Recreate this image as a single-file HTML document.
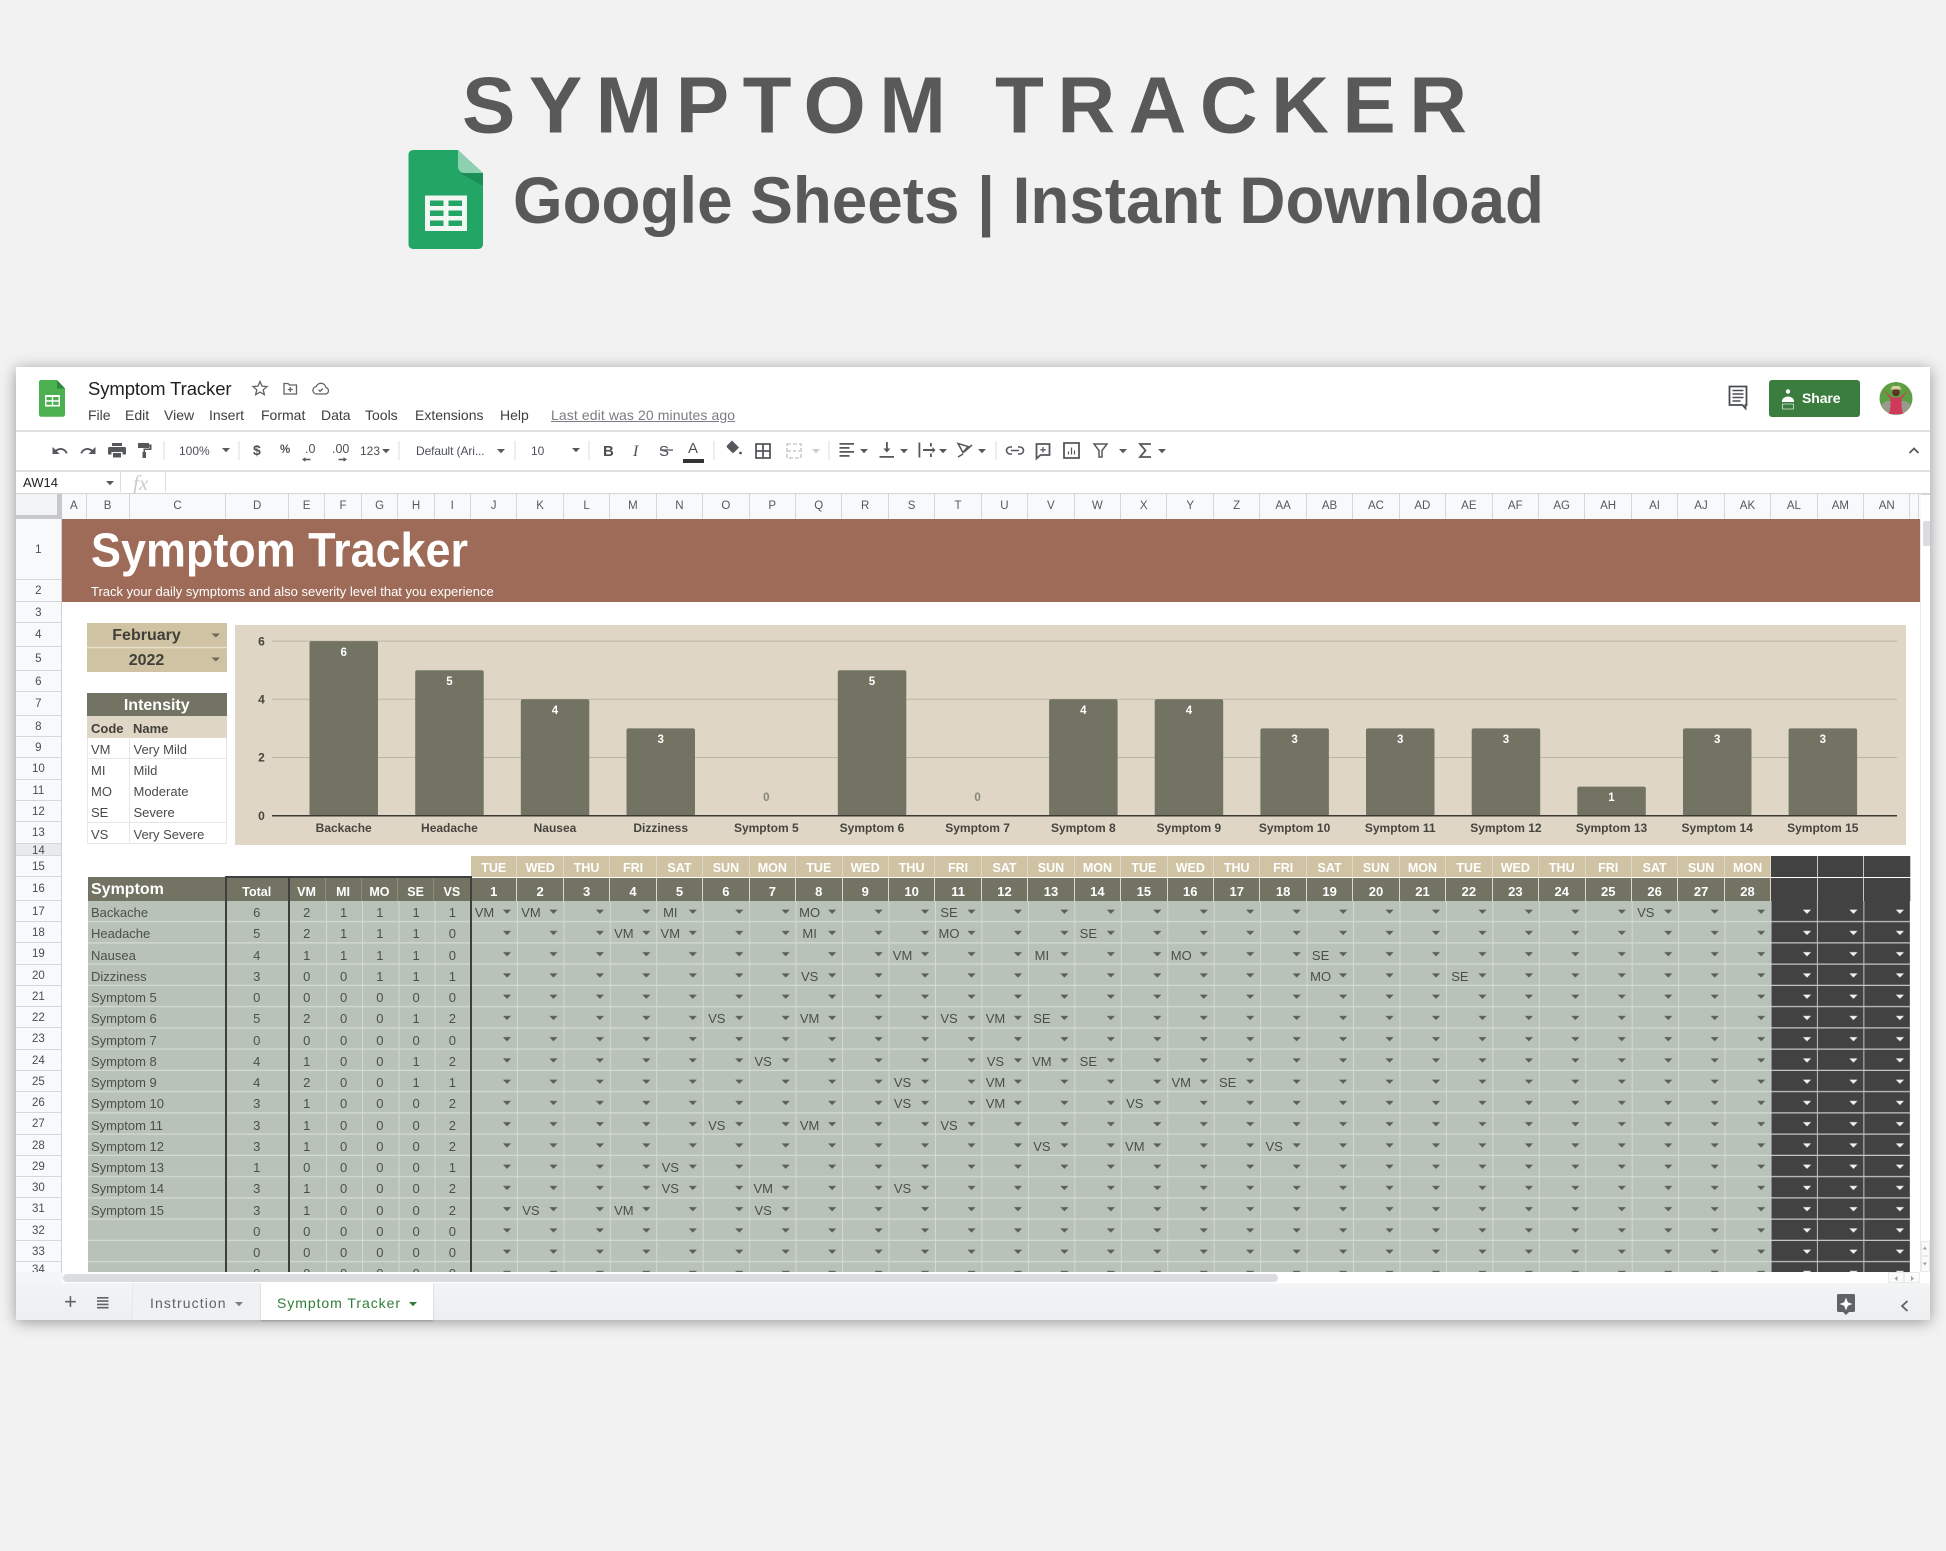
<!DOCTYPE html>
<html lang="en"><head><meta charset="utf-8"><title>Symptom Tracker</title>
<style>
*{box-sizing:border-box}
html,body{margin:0;padding:0}
body{position:relative;width:1946px;height:1551px;overflow:hidden;background:#f2f2f2;font-family:"Liberation Sans",Arial,sans-serif;color:#3c4043}
.a{position:absolute}
#win{left:15.5px;top:367px;width:1914.5px;height:953px;background:#fff;box-shadow:0 2px 14px rgba(0,0,0,.38)}
.hl{position:absolute;left:15.5px;width:1914.5px;height:1.5px;background:#dfe1e3}
.sep{position:absolute;width:1px;background:#dadce0}
.m{position:absolute;top:407px;font-size:14px;line-height:17px;color:#3c4043}
.t{position:absolute;font-size:12px;line-height:14px;color:#4d5156;top:443px}
#ch{left:15.5px;top:494px;width:1905px;height:25px;display:grid;grid-template-columns:46.5px 24.7px 42.9px 96.9px 62.3px 36.7px 36.2px 36.8px 36.2px 36.3px repeat(31,46.45px) 9px;background:#f8f9fa}
#ch i{font-style:normal;font-size:11.5px;line-height:25px;text-align:center;color:#55585c;border-right:1px solid #d5d8db;border-bottom:1px solid #c4c7c9}
#rh{left:15.7px;top:519px;width:46.3px;height:753px;display:grid;grid-template-rows:61px 22px 20.7px 24px 24.3px 21px 24px 21px 21.5px 21.5px 21px 21px 22px 12px 21px 24px repeat(18,21.25px);overflow:hidden;background:#f8f9fa}
#rh i{font-style:normal;font-size:11.5px;text-align:center;color:#4a4d50;border-bottom:1px solid #d5d8db;border-right:1px solid #cfd2d5;overflow:hidden;display:flex;align-items:center;justify-content:center;padding-top:1.5px}
#gr{left:87.5px;top:901px;width:1822.5px;height:371px;overflow:hidden}
.r{display:flex;height:21.25px;font-size:13px;line-height:23px;color:#4c5048;position:relative}
.r i{font-style:normal;text-align:center;display:block}
.r i:nth-child(1){width:138px;text-align:left;padding-left:3.5px}
.r i:nth-child(2){width:62.5px}.r i:nth-child(3){width:37.5px}.r i:nth-child(4){width:36.2px}.r i:nth-child(5){width:36.4px}.r i:nth-child(6){width:36px}.r i:nth-child(7){width:36.5px}
.v{position:absolute;width:28px;text-align:center;font-size:13px;line-height:23px;color:#4a4e46;left:calc(383px + var(--c)*46.45px);top:calc(var(--r)*21.25px)}
.hd{left:471px;display:flex;font-weight:700;font-size:12.5px;text-align:center;color:#fff}
.hd i{font-style:normal;width:46.45px;border-right:1px solid #dcd8cc;display:block}
.hd i.k{background:#424242!important;border-right:1px solid #c8c8c8}
#d1{top:856px;height:21px;line-height:24px}#d1 i{background:#cfc3a3}
#d2{top:878px;height:23px;line-height:28px;font-size:13px}#d2 i{background:#727363}
.lh{top:877px;height:24px;background:#727363;color:#fff;font-weight:700;font-size:12.5px;line-height:31px;text-align:center;border-right:1px solid #8d8e80}
.ir{left:87px;width:139.5px;height:21.5px;background:#fff;border-bottom:1.5px solid #e6e6e6;font-size:13px;line-height:23px;color:#4a4a4a;border-left:1.5px solid #e6e6e6;border-right:1.5px solid #e6e6e6}
.ir b{font-weight:400;position:absolute;left:3px;top:0}.ir em{font-style:normal;position:absolute;left:45.5px;top:0}
</style></head><body>

<div class="a" id="win"></div>

<!-- top separators -->
<div class="hl" style="top:430px"></div>
<div class="hl" style="top:470px"></div>
<div class="hl" style="top:493px;background:#d3d5d8"></div>

<!-- title bar text -->
<div class="a" style="left:88px;top:378px;font-size:18.5px;line-height:22px;color:#202124;letter-spacing:-.1px">Symptom Tracker</div>
<div class="m" style="left:88px">File</div><div class="m" style="left:125px">Edit</div><div class="m" style="left:164px">View</div><div class="m" style="left:209px">Insert</div><div class="m" style="left:261px">Format</div><div class="m" style="left:321px">Data</div><div class="m" style="left:365px">Tools</div><div class="m" style="left:415px">Extensions</div><div class="m" style="left:500px">Help</div>
<div class="m" style="left:551px;color:#7a7d81;text-decoration:underline;letter-spacing:.1px">Last edit was 20 minutes ago</div>

<!-- share -->
<div class="a" style="left:1769px;top:380px;width:91px;height:37px;background:#3b7d3f;border-radius:3px"></div>
<div class="a" style="left:1802px;top:390px;font-size:14px;line-height:17px;color:#fff;font-weight:700;letter-spacing:-.1px">Share</div>

<!-- toolbar text -->
<div class="t" style="left:179px;top:444px">100%</div>
<div class="t" style="left:253px;font-size:14px;top:443px;font-weight:700">$</div>
<div class="t" style="left:280px;font-weight:700;font-size:11.5px">%</div>
<div class="t" style="left:305px;font-weight:400;font-size:12.5px;top:442px">.0</div>
<div class="t" style="left:332px;font-weight:400;font-size:12.5px;top:442px">.00</div>
<div class="t" style="left:360px;top:444px">123</div>
<div class="t" style="left:416px;top:444px;letter-spacing:-.1px">Default (Ari...</div>
<div class="t" style="left:531px;top:444px">10</div>
<div class="t" style="left:603px;top:443px;font-weight:700;font-size:15px;line-height:17px">B</div>
<div class="t" style="left:633px;top:443px;font-size:16px;line-height:17px;font-family:'Liberation Serif',serif;font-style:italic">I</div>
<div class="t" style="left:659px;top:443px;font-size:15px;line-height:17px">S</div>
<div class="t" style="left:688px;top:440px;font-size:15px;line-height:17px">A</div>
<div class="a" style="left:683px;top:459px;width:21px;height:4px;background:#333"></div>

<!-- formula bar -->
<div class="a" style="left:23px;top:475px;font-size:13px;line-height:15px;color:#202124">AW14</div>
<div class="a" style="left:133px;top:471px;font-size:21px;line-height:24px;color:#c9cbce;font-family:'Liberation Serif',serif;font-style:italic">fx</div>
<div class="sep" style="left:120px;top:472px;height:20px"></div>
<div class="sep" style="left:165px;top:472px;height:20px"></div>

<!-- column headers -->
<div class="a" id="ch"><i style="background:#f1f3f4;border-right:5px solid #c6c8cb;border-bottom:5px solid #c6c8cb"></i><i>A</i><i>B</i><i>C</i><i>D</i><i>E</i><i>F</i><i>G</i><i>H</i><i>I</i><i>J</i><i>K</i><i>L</i><i>M</i><i>N</i><i>O</i><i>P</i><i>Q</i><i>R</i><i>S</i><i>T</i><i>U</i><i>V</i><i>W</i><i>X</i><i>Y</i><i>Z</i><i>AA</i><i>AB</i><i>AC</i><i>AD</i><i>AE</i><i>AF</i><i>AG</i><i>AH</i><i>AI</i><i>AJ</i><i>AK</i><i>AL</i><i>AM</i><i>AN</i><i></i></div>

<!-- row headers -->
<div class="a" id="rh"><i>1</i><i>2</i><i>3</i><i>4</i><i>5</i><i>6</i><i>7</i><i>8</i><i>9</i><i>10</i><i>11</i><i>12</i><i>13</i><i style="background:#e8eaed;align-items:flex-start">14</i><i>15</i><i>16</i><i>17</i><i>18</i><i>19</i><i>20</i><i>21</i><i>22</i><i>23</i><i>24</i><i>25</i><i>26</i><i>27</i><i>28</i><i>29</i><i>30</i><i>31</i><i>32</i><i>33</i><i style="align-items:flex-start">34</i></div>

<!-- banner -->
<div class="a" style="left:62px;top:519px;width:1858px;height:83px;background:#9e6b58"></div>
<div class="a" style="left:91px;top:584px;font-size:13px;line-height:16px;color:#fff">Track your daily symptoms and also severity level that you experience</div>

<!-- dropdown block -->
<div class="a" style="left:87px;top:623px;width:140px;height:24px;background:#cfc3a3;font-weight:700;font-size:16px;line-height:26px;color:#403f38;text-align:center;padding-right:21px">February</div>
<div class="a" style="left:87px;top:648px;width:140px;height:24px;background:#cfc3a3;font-weight:700;font-size:16px;line-height:25px;color:#403f38;text-align:center;padding-right:21px">2022</div>

<!-- intensity -->
<div class="a" style="left:87px;top:693px;width:139.5px;height:23px;background:#727363;color:#fff;font-weight:700;font-size:16px;line-height:26px;text-align:center">Intensity</div>
<div class="a" style="left:87px;top:716px;width:139.5px;height:21.5px;background:#e0d6c5;font-size:13px;font-weight:700;line-height:25px;color:#403f38"><span class="a" style="left:4px">Code</span><span class="a" style="left:46px">Name</span></div>
<div class="a ir" style="top:737.5px"><b>VM</b><em>Very Mild</em></div>
<div class="a ir" style="top:759px"><b>MI</b><em>Mild</em></div>
<div class="a ir" style="top:780px"><b>MO</b><em>Moderate</em></div>
<div class="a ir" style="top:801px"><b>SE</b><em>Severe</em></div>
<div class="a ir" style="top:822.5px"><b>VS</b><em>Very Severe</em></div>
<div class="a" style="left:128.5px;top:737px;width:1.5px;height:107px;background:#e6e6e6"></div>

<!-- chart background -->
<div class="a" style="left:235px;top:624.5px;width:1671px;height:220px;background:#e0d6c5"></div>

<!-- table headers -->
<div class="a" style="left:87.5px;top:877px;width:138.5px;height:24px;background:#727363;color:#fff;font-weight:700;font-size:16px;line-height:25px;padding-left:3.5px">Symptom</div>
<div class="a lh" style="left:226px;width:62.5px">Total</div>
<div class="a lh" style="left:288.5px;width:37px">VM</div>
<div class="a lh" style="left:325.5px;width:36.2px">MI</div>
<div class="a lh" style="left:361.7px;width:36.4px">MO</div>
<div class="a lh" style="left:398.1px;width:36px">SE</div>
<div class="a lh" style="left:434.1px;width:36.5px">VS</div>

<div class="a hd" id="d1"><i>TUE</i><i>WED</i><i>THU</i><i>FRI</i><i>SAT</i><i>SUN</i><i>MON</i><i>TUE</i><i>WED</i><i>THU</i><i>FRI</i><i>SAT</i><i>SUN</i><i>MON</i><i>TUE</i><i>WED</i><i>THU</i><i>FRI</i><i>SAT</i><i>SUN</i><i>MON</i><i>TUE</i><i>WED</i><i>THU</i><i>FRI</i><i>SAT</i><i>SUN</i><i>MON</i><i class="k"></i><i class="k"></i><i class="k"></i></div>
<div class="a hd" id="d2"><i>1</i><i>2</i><i>3</i><i>4</i><i>5</i><i>6</i><i>7</i><i>8</i><i>9</i><i>10</i><i>11</i><i>12</i><i>13</i><i>14</i><i>15</i><i>16</i><i>17</i><i>18</i><i>19</i><i>20</i><i>21</i><i>22</i><i>23</i><i>24</i><i>25</i><i>26</i><i>27</i><i>28</i><i class="k"></i><i class="k"></i><i class="k"></i></div>

<!-- grid body -->
<div class="a" id="gr">
<svg class="a" style="left:0;top:0" width="1822.5" height="371" xmlns="http://www.w3.org/2000/svg">
<defs>
<pattern id="rowp" x="0" y="0" width="2000" height="21.25" patternUnits="userSpaceOnUse"><rect width="2000" height="21.25" fill="#b8c2b9"/><rect y="20" width="2000" height="1.25" fill="#d3d9d3"/></pattern>
<pattern id="dayp" x="383.5" y="0" width="46.45" height="21.25" patternUnits="userSpaceOnUse"><rect width="46.45" height="21.25" fill="#b8c2b9"/><rect y="20" width="46.45" height="1.25" fill="#d3d9d3"/><rect x="45.4" width="1" height="21.25" fill="#d3d9d3"/><path d="M31.4 8.6h8.2l-4.1 4.2z" fill="#5a5e55"/></pattern>
<pattern id="drkp" x="1683.5" y="0" width="46.45" height="21.25" patternUnits="userSpaceOnUse"><rect width="46.45" height="21.25" fill="#424242"/><rect y="20" width="46.45" height="1.25" fill="#c4c4c4"/><rect x="45.4" width="1" height="21.25" fill="#c4c4c4"/><path d="M31.4 8.6h8.2l-4.1 4.2z" fill="#f2f2f2"/></pattern>
</defs>
<rect x="0" y="0" width="383.5" height="371" fill="url(#rowp)"/>
<rect x="383.5" y="0" width="1300.6" height="371" fill="url(#dayp)"/>
<rect x="1683.5" y="0" width="139.4" height="371" fill="url(#drkp)"/>
<g fill="#d3d9d3"><rect x="238" width="1" height="371"/><rect x="274" width="1" height="371"/><rect x="310.5" width="1" height="371"/><rect x="346.5" width="1" height="371"/></g>
</svg>
<div class="r"><i>Backache</i><i>6</i><i>2</i><i>1</i><i>1</i><i>1</i><i>1</i></div>
<div class="r"><i>Headache</i><i>5</i><i>2</i><i>1</i><i>1</i><i>1</i><i>0</i></div>
<div class="r"><i>Nausea</i><i>4</i><i>1</i><i>1</i><i>1</i><i>1</i><i>0</i></div>
<div class="r"><i>Dizziness</i><i>3</i><i>0</i><i>0</i><i>1</i><i>1</i><i>1</i></div>
<div class="r"><i>Symptom 5</i><i>0</i><i>0</i><i>0</i><i>0</i><i>0</i><i>0</i></div>
<div class="r"><i>Symptom 6</i><i>5</i><i>2</i><i>0</i><i>0</i><i>1</i><i>2</i></div>
<div class="r"><i>Symptom 7</i><i>0</i><i>0</i><i>0</i><i>0</i><i>0</i><i>0</i></div>
<div class="r"><i>Symptom 8</i><i>4</i><i>1</i><i>0</i><i>0</i><i>1</i><i>2</i></div>
<div class="r"><i>Symptom 9</i><i>4</i><i>2</i><i>0</i><i>0</i><i>1</i><i>1</i></div>
<div class="r"><i>Symptom 10</i><i>3</i><i>1</i><i>0</i><i>0</i><i>0</i><i>2</i></div>
<div class="r"><i>Symptom 11</i><i>3</i><i>1</i><i>0</i><i>0</i><i>0</i><i>2</i></div>
<div class="r"><i>Symptom 12</i><i>3</i><i>1</i><i>0</i><i>0</i><i>0</i><i>2</i></div>
<div class="r"><i>Symptom 13</i><i>1</i><i>0</i><i>0</i><i>0</i><i>0</i><i>1</i></div>
<div class="r"><i>Symptom 14</i><i>3</i><i>1</i><i>0</i><i>0</i><i>0</i><i>2</i></div>
<div class="r"><i>Symptom 15</i><i>3</i><i>1</i><i>0</i><i>0</i><i>0</i><i>2</i></div>
<div class="r"><i></i><i>0</i><i>0</i><i>0</i><i>0</i><i>0</i><i>0</i></div>
<div class="r"><i></i><i>0</i><i>0</i><i>0</i><i>0</i><i>0</i><i>0</i></div>
<div class="r"><i></i><i>0</i><i>0</i><i>0</i><i>0</i><i>0</i><i>0</i></div>

<span class="v" style="--r:0;--c:0">VM</span><span class="v" style="--r:0;--c:1">VM</span><span class="v" style="--r:0;--c:4">MI</span><span class="v" style="--r:0;--c:7">MO</span><span class="v" style="--r:0;--c:10">SE</span><span class="v" style="--r:0;--c:25">VS</span>
<span class="v" style="--r:1;--c:3">VM</span><span class="v" style="--r:1;--c:4">VM</span><span class="v" style="--r:1;--c:7">MI</span><span class="v" style="--r:1;--c:10">MO</span><span class="v" style="--r:1;--c:13">SE</span>
<span class="v" style="--r:2;--c:9">VM</span><span class="v" style="--r:2;--c:12">MI</span><span class="v" style="--r:2;--c:15">MO</span><span class="v" style="--r:2;--c:18">SE</span>
<span class="v" style="--r:3;--c:7">VS</span><span class="v" style="--r:3;--c:18">MO</span><span class="v" style="--r:3;--c:21">SE</span>
<span class="v" style="--r:5;--c:5">VS</span><span class="v" style="--r:5;--c:7">VM</span><span class="v" style="--r:5;--c:10">VS</span><span class="v" style="--r:5;--c:11">VM</span><span class="v" style="--r:5;--c:12">SE</span>
<span class="v" style="--r:7;--c:6">VS</span><span class="v" style="--r:7;--c:11">VS</span><span class="v" style="--r:7;--c:12">VM</span><span class="v" style="--r:7;--c:13">SE</span>
<span class="v" style="--r:8;--c:9">VS</span><span class="v" style="--r:8;--c:11">VM</span><span class="v" style="--r:8;--c:15">VM</span><span class="v" style="--r:8;--c:16">SE</span>
<span class="v" style="--r:9;--c:9">VS</span><span class="v" style="--r:9;--c:11">VM</span><span class="v" style="--r:9;--c:14">VS</span>
<span class="v" style="--r:10;--c:5">VS</span><span class="v" style="--r:10;--c:7">VM</span><span class="v" style="--r:10;--c:10">VS</span>
<span class="v" style="--r:11;--c:12">VS</span><span class="v" style="--r:11;--c:14">VM</span><span class="v" style="--r:11;--c:17">VS</span>
<span class="v" style="--r:12;--c:4">VS</span>
<span class="v" style="--r:13;--c:4">VS</span><span class="v" style="--r:13;--c:6">VM</span><span class="v" style="--r:13;--c:9">VS</span>
<span class="v" style="--r:14;--c:1">VS</span><span class="v" style="--r:14;--c:3">VM</span><span class="v" style="--r:14;--c:6">VS</span>
</div>

<!-- thick borders -->
<div class="a" style="left:225px;top:876px;width:246.5px;height:2px;background:#3f3f3f"></div>
<div class="a" style="left:225px;top:876px;width:2px;height:396px;background:#3f3f3f"></div>
<div class="a" style="left:287.5px;top:876px;width:2px;height:396px;background:#3f3f3f"></div>
<div class="a" style="left:469.8px;top:876px;width:2px;height:396px;background:#3f3f3f"></div>

<!-- scrollbars -->
<div class="a" style="left:1920px;top:519px;width:10px;height:764px;background:#fff;border-left:1px solid #e6e8ea"></div>
<div class="a" style="left:1923px;top:521px;width:7px;height:25px;background:#dadce0;border-radius:2px 0 0 2px"></div>
<div class="a" style="left:1921px;top:1241px;width:9px;height:15px;border:1px solid #e6e8ea;background:#fafafa"></div>
<div class="a" style="left:1921px;top:1256px;width:9px;height:16px;border:1px solid #e6e8ea;background:#fafafa"></div>
<div class="a" style="left:15.5px;top:1272px;width:47px;height:11px;background:#f4f5f6"></div>
<div class="a" style="left:62.5px;top:1272px;width:1867.5px;height:11px;background:#fff"></div>
<div class="a" style="left:62.5px;top:1274px;width:1215px;height:8px;background:#dadce0;border-radius:4px"></div>
<div class="a" style="left:1888px;top:1272px;width:16px;height:11px;border:1px solid #e9eaec;background:#fafafa"></div>
<div class="a" style="left:1904px;top:1272px;width:16px;height:11px;border:1px solid #e9eaec;background:#fafafa"></div>

<!-- bottom bar -->
<div class="a" style="left:15.5px;top:1283px;width:1914.5px;height:37px;background:linear-gradient(#f3f4f5,#eceef0)"></div>
<div class="a" style="left:132px;top:1283px;width:129px;height:37px;background:#f0f1f3;border-left:1px solid #e6e8ea;font-size:14px;line-height:41px;color:#5f6368;padding-left:17px;letter-spacing:1.1px">Instruction</div>
<div class="a" style="left:260.5px;top:1283px;width:172.5px;height:37px;background:#fff;font-size:14px;line-height:41px;color:#2f7d36;padding-left:16.5px;letter-spacing:.95px;box-shadow:0 1px 2px rgba(0,0,0,.2)">Symptom Tracker</div>
<div class="a" style="left:64px;top:1289px;font-size:22px;line-height:26px;color:#5f6368">+</div>

<!-- overlay: headings, chart, icons -->
<svg class="a" style="left:0;top:0" width="1946" height="1551" viewBox="0 0 1946 1551" xmlns="http://www.w3.org/2000/svg">
<defs><path id="k" d="M-4-2h8l-4 4.2z"/></defs>

<text x="462" y="132.500" font-family="Liberation Sans" font-weight="700" font-size="80" fill="#595959" textLength="1005" lengthAdjust="spacing">SYMPTOM TRACKER</text>
<text x="513" y="223" font-family="Liberation Sans" font-weight="700" font-size="66" fill="#595959" textLength="1031" lengthAdjust="spacingAndGlyphs">Google Sheets | Instant Download</text>
<text x="91" y="566.500" font-family="Liberation Sans" font-weight="700" font-size="48" fill="#fff" textLength="377" lengthAdjust="spacingAndGlyphs">Symptom Tracker</text>

<!-- big logo -->
<path d="M413 150h45l25 23v71.500a4.500 4.500 0 0 1-4.500 4.500h-65.500a4.500 4.500 0 0 1-4.500-4.500v-90a4.500 4.500 0 0 1 4.500-4.500z" fill="#23a566"/>
<path d="M458 150l25 23h-18.500a6.500 6.500 0 0 1-6.500-6.500z" fill="#8ed1b1"/>
<path d="M460 173h23v13z" fill="#1c8f56"/>
<path d="M425 195.500h42v35.500h-42z" fill="#f3f7f4"/>
<g fill="#23a566"><rect x="430" y="200.500" width="13.500" height="5.500"/><rect x="448.500" y="200.500" width="13.500" height="5.500"/><rect x="430" y="210.500" width="13.500" height="5.500"/><rect x="448.500" y="210.500" width="13.500" height="5.500"/><rect x="430" y="220.500" width="13.500" height="5.500"/><rect x="448.500" y="220.500" width="13.500" height="5.500"/></g>

<!-- small logo -->
<path d="M41 380h16l8 8.500v26a2.300 2.300 0 0 1-2.300 2.300h-21.400a2.300 2.300 0 0 1-2.300-2.300v-32.200a2.300 2.300 0 0 1 2-2.300z" fill="#4caf50"/>
<path d="M57 380l8 8.500h-8z" fill="#2e8b3c"/>
<path d="M45 395h15v11.500h-15z" fill="#fff"/><g fill="#4caf50"><rect x="46.500" y="397" width="5.300" height="3.200"/><rect x="53.200" y="397" width="5.300" height="3.200"/><rect x="46.500" y="401.700" width="5.300" height="3.200"/><rect x="53.200" y="401.700" width="5.300" height="3.200"/></g>

<!-- title icons -->
<g fill="none" stroke="#5f6368" stroke-width="1.300">
<path d="M260 381.500l2 4.600 5 .4-3.800 3.300 1.200 4.900-4.400-2.600-4.400 2.600 1.200-4.900-3.800-3.300 5-.4z"/>
<path d="M284 383.500h4l1.500 1.500h7v9h-12.500z"/><path d="M290.300 387v5M287.800 389.500h5"/>
<path d="M316 394h9.500a3.300 3.300 0 0 0 .4-6.500 5 5 0 0 0-9.600-1 3.800 3.800 0 0 0-.3 7.500z"/><path d="M318.500 389.800l1.500 1.500 2.800-2.800"/>
</g>

<!-- comments -->
<path d="M1729.500 386.500h17v18.500h-1v3.300l-3-3.300h-13z" fill="none" stroke="#4a4d50" stroke-width="1.800"/>
<path d="M1732.500 390.500h11M1732.500 394h11M1732.500 397.500h11M1732.500 401h8" stroke="#4a4d50" stroke-width="1.400"/>

<!-- share person -->
<circle cx="1788" cy="391.500" r="2.200" fill="#fff"/><path d="M1782 401a6 4.500 0 0 1 12 0v1h-12z" fill="#fff"/>
<path d="M1782.500 404h11v5h-11z" fill="none" stroke="#d6e6d7" stroke-width=".8"/>

<!-- avatar -->
<circle cx="1896" cy="398.500" r="16.500" fill="#5f9f43"/>
<path d="M1881 405c4 7 9 10 15 10s11-3 15-10l-5-4h-20z" fill="#9a9a8c"/>
<path d="M1884 390l8 7.500h8l8-7.500-6.500 9v8l1.500 7h-14l1.500-7v-8z" fill="#d03a5a"/>
<circle cx="1896" cy="392.500" r="3.800" fill="#5c3526"/><path d="M1890.500 389.500h11l-2-3.500h-7z" fill="#d8cf9e"/>

<!-- toolbar icons -->
<g fill="#55585c">
<path d="M52.500 447v7h7l-2.700-2.700c3.200-2.600 7.200-1.700 9.200 2.400l1.600-.7c-2.300-5.200-7.700-6.400-12-3.100l-3.100-2.900z"/>
<path d="M95.500 447v7h-7l2.700-2.700c-3.200-2.600-7.200-1.700-9.200 2.400l-1.600-.7c2.300-5.200 7.700-6.400 12-3.100l3.100-2.900z"/>
<path d="M112 443h10v3h-10zM109.500 447h15a1.500 1.500 0 0 1 1.500 1.500v6h-3.500v-2.500h-11v2.500h-3.500v-6a1.500 1.500 0 0 1 1.500-1.500zM113 453h8v4.500h-8z"/>
<path d="M138 443h11v1.500h2.500v5.500h-6.500v2h1v6h-3.500v-6h1v-3.500h6v-2h-.5v1.500h-11z"/>
<path d="M302 459.500l3.500-2.200v1.500h5v1.500h-5v1.500z"/>
<path d="M347 459.500l-3.500-2.200v1.500h-5v1.500h5v1.500z"/>
<use href="#k" x="226" y="450"/><use href="#k" x="386" y="451"/><use href="#k" x="501" y="451"/><use href="#k" x="576" y="450"/>
<use href="#k" x="864" y="451"/><use href="#k" x="904" y="451"/><use href="#k" x="943" y="451"/><use href="#k" x="982" y="451"/><use href="#k" x="1123" y="451"/><use href="#k" x="1162" y="451"/>
<use href="#k" x="110" y="483"/>
<path d="M727 445.500l5-5 7 7-5 5a1.500 1.500 0 0 1-2 0l-5-5a1.500 1.500 0 0 1 0-2z"/><circle cx="740.500" cy="453" r="1.400"/>
<path d="M839.500 443h14.500v1.800h-14.500zM839.500 447h10v1.800h-10zM839.500 451h14.500v1.800h-14.500zM839.500 455h10v1.800h-10z"/>
<path d="M886 442h1.800v6.500h2.700l-3.600 4-3.600-4h2.700zM879.500 456h14.500v1.800h-14.500z"/>
<path d="M918.500 442.500h1.800v15h-1.800zM930 443h1.800v3.500h-1.800zM930 453.500h1.800v3.500h-1.800zM923 449h9.500v-2l3 3-3 3v-2h-9.500z"/>
</g>
<g fill="none" stroke="#55585c" stroke-width="1.800">
<path d="M660 450h13" stroke-width="1.300"/>
<path d="M756 444h14v14h-14zM763 444v14M756 451h14"/>
<path d="M958 443.500l10 3-5 6zM964 452l8-7M958 457l5-3" stroke-width="1.500"/>
<path d="M1012 447h-2a3.500 3.500 0 0 0 0 7h2M1018 447h2a3.500 3.500 0 0 1 0 7h-2M1011 450.500h8" stroke-width="1.600"/>
<path d="M1036.500 444h13v11h-9l-4 3.500z"/><path d="M1043 447v5.500M1040.300 449.800h5.500" stroke-width="1.300"/>
<path d="M1064 443h15v15h-15z"/><path d="M1068.500 454.500v-3M1071.500 454.500v-7M1074.500 454.500v-4" stroke-width="1.200"/>
<path d="M1094 444h13l-5 6.500v6.500h-3v-6.500z" stroke-width="1.500"/>
<path d="M1151 444h-11l5.500 6.500-5.500 6.500h11" stroke-width="1.800"/>
<path d="M1909.500 453l4.500-4.500 4.500 4.500" stroke-width="1.700"/>
</g>
<g fill="none" stroke="#c9cbce" stroke-width="1.600" stroke-dasharray="4 2">
<path d="M787 444h14v14h-14z"/><path d="M788 451h12" stroke-dasharray="3 2"/>
</g>
<use href="#k" x="816" y="451" fill="#c9cbce"/>

<!-- toolbar separators -->
<g stroke="#dadce0" stroke-width="1"><path d="M164 441v19M239 441v19M399 441v19M515 441v19M589 441v19M714 441v19M829 441v19M996 441v19"/></g>

<!-- dropdown arrows -->
<path d="M87 647.500h140" stroke="#e6dfca" stroke-width="1.500"/>
<path d="M211.500 633.500h8.500l-4.200 4z" fill="#6b6957"/><path d="M211.500 657.500h8.500l-4.200 4z" fill="#6b6957"/>

<!-- chart -->
<g stroke="#bdb5a4" stroke-width="1"><path d="M272 641.100H1897M272 699.300H1897M272 757.500H1897"/></g>
<g fill="#727363" transform="translate(-.5 0)">
<rect x="310" y="641.100" width="68.500" height="174.600" rx="2"/>
<rect x="415.700" y="670.200" width="68.500" height="145.500" rx="2"/>
<rect x="521.300" y="699.300" width="68.500" height="116.400" rx="2"/>
<rect x="627" y="728.400" width="68.500" height="87.300" rx="2"/>
<rect x="838.300" y="670.200" width="68.500" height="145.500" rx="2"/>
<rect x="1049.600" y="699.300" width="68.500" height="116.400" rx="2"/>
<rect x="1155.200" y="699.300" width="68.500" height="116.400" rx="2"/>
<rect x="1260.900" y="728.400" width="68.500" height="87.300" rx="2"/>
<rect x="1366.500" y="728.400" width="68.500" height="87.300" rx="2"/>
<rect x="1472.200" y="728.400" width="68.500" height="87.300" rx="2"/>
<rect x="1577.800" y="786.600" width="68.500" height="29.100" rx="2"/>
<rect x="1683.500" y="728.400" width="68.500" height="87.300" rx="2"/>
<rect x="1789.100" y="728.400" width="68.500" height="87.300" rx="2"/>
</g>
<path d="M272 815.700H1897" stroke="#3a3a32" stroke-width="1.500"/>
<g font-family="Liberation Sans" font-weight="700" font-size="12" fill="#45453e" text-anchor="middle" transform="translate(-.5 0)">
<text x="262" y="645.500">6</text><text x="262" y="703.500">4</text><text x="262" y="761.500">2</text><text x="262" y="820">0</text>
<text x="344.200" y="832">Backache</text><text x="449.900" y="832">Headache</text><text x="555.500" y="832">Nausea</text><text x="661.200" y="832">Dizziness</text><text x="766.800" y="832">Symptom 5</text><text x="872.500" y="832">Symptom 6</text><text x="978.100" y="832">Symptom 7</text><text x="1083.800" y="832">Symptom 8</text><text x="1189.400" y="832">Symptom 9</text><text x="1295.100" y="832">Symptom 10</text><text x="1400.700" y="832">Symptom 11</text><text x="1506.400" y="832">Symptom 12</text><text x="1612" y="832">Symptom 13</text><text x="1717.700" y="832">Symptom 14</text><text x="1823.300" y="832">Symptom 15</text>
</g>
<g font-family="Liberation Sans" font-weight="700" font-size="11.500" fill="#fff" text-anchor="middle" transform="translate(-.5 0)">
<text x="344.200" y="656">6</text><text x="449.900" y="685">5</text><text x="555.500" y="714">4</text><text x="661.200" y="743">3</text><text x="872.500" y="685">5</text><text x="1083.800" y="714">4</text><text x="1189.400" y="714">4</text><text x="1295.100" y="743">3</text><text x="1400.700" y="743">3</text><text x="1506.400" y="743">3</text><text x="1612" y="801">1</text><text x="1717.700" y="743">3</text><text x="1823.300" y="743">3</text>
</g>
<g font-family="Liberation Sans" font-weight="700" font-size="11.500" fill="#85857a" text-anchor="middle"><text x="766.300" y="801">0</text><text x="977.600" y="801">0</text></g>

<!-- scroll arrows -->
<path d="M1922.800 1249.500h4l-2-3zM1922.800 1262.500h4l-2 3z" fill="#9a9da0"/>
<path d="M1897.500 1276v5l-3-2.500zM1911 1276v5l3-2.500z" fill="#9a9da0"/>

<!-- bottom icons -->
<g fill="#5f6368">
<path d="M97 1297h11.500v1.600h-11.500zM97 1300.300h11.500v1.600h-11.500zM97 1303.600h11.500v1.600h-11.500zM97 1306.900h11.500v1.600h-11.500z"/>
<use href="#k" x="239" y="1304" fill="#7a7d81"/>
<path d="M1838.500 1294h15a1.500 1.500 0 0 1 1.500 1.500v15a1.500 1.500 0 0 1-1.500 1.500h-4.500l-3 3-3-3h-4.500a1.500 1.500 0 0 1-1.500-1.500v-15a1.500 1.500 0 0 1 1.500-1.500z"/>
</g>
<use href="#k" x="413" y="1304" fill="#2f7d36"/>
<path d="M1846 1297.500l1.800 4.700 4.700 1.800-4.700 1.800-1.800 4.700-1.800-4.700-4.700-1.800 4.700-1.800z" fill="#fff"/>
<path d="M1907.500 1301l-5.500 5 5.500 5" fill="none" stroke="#5f6368" stroke-width="1.800"/>
</svg>

</body></html>
